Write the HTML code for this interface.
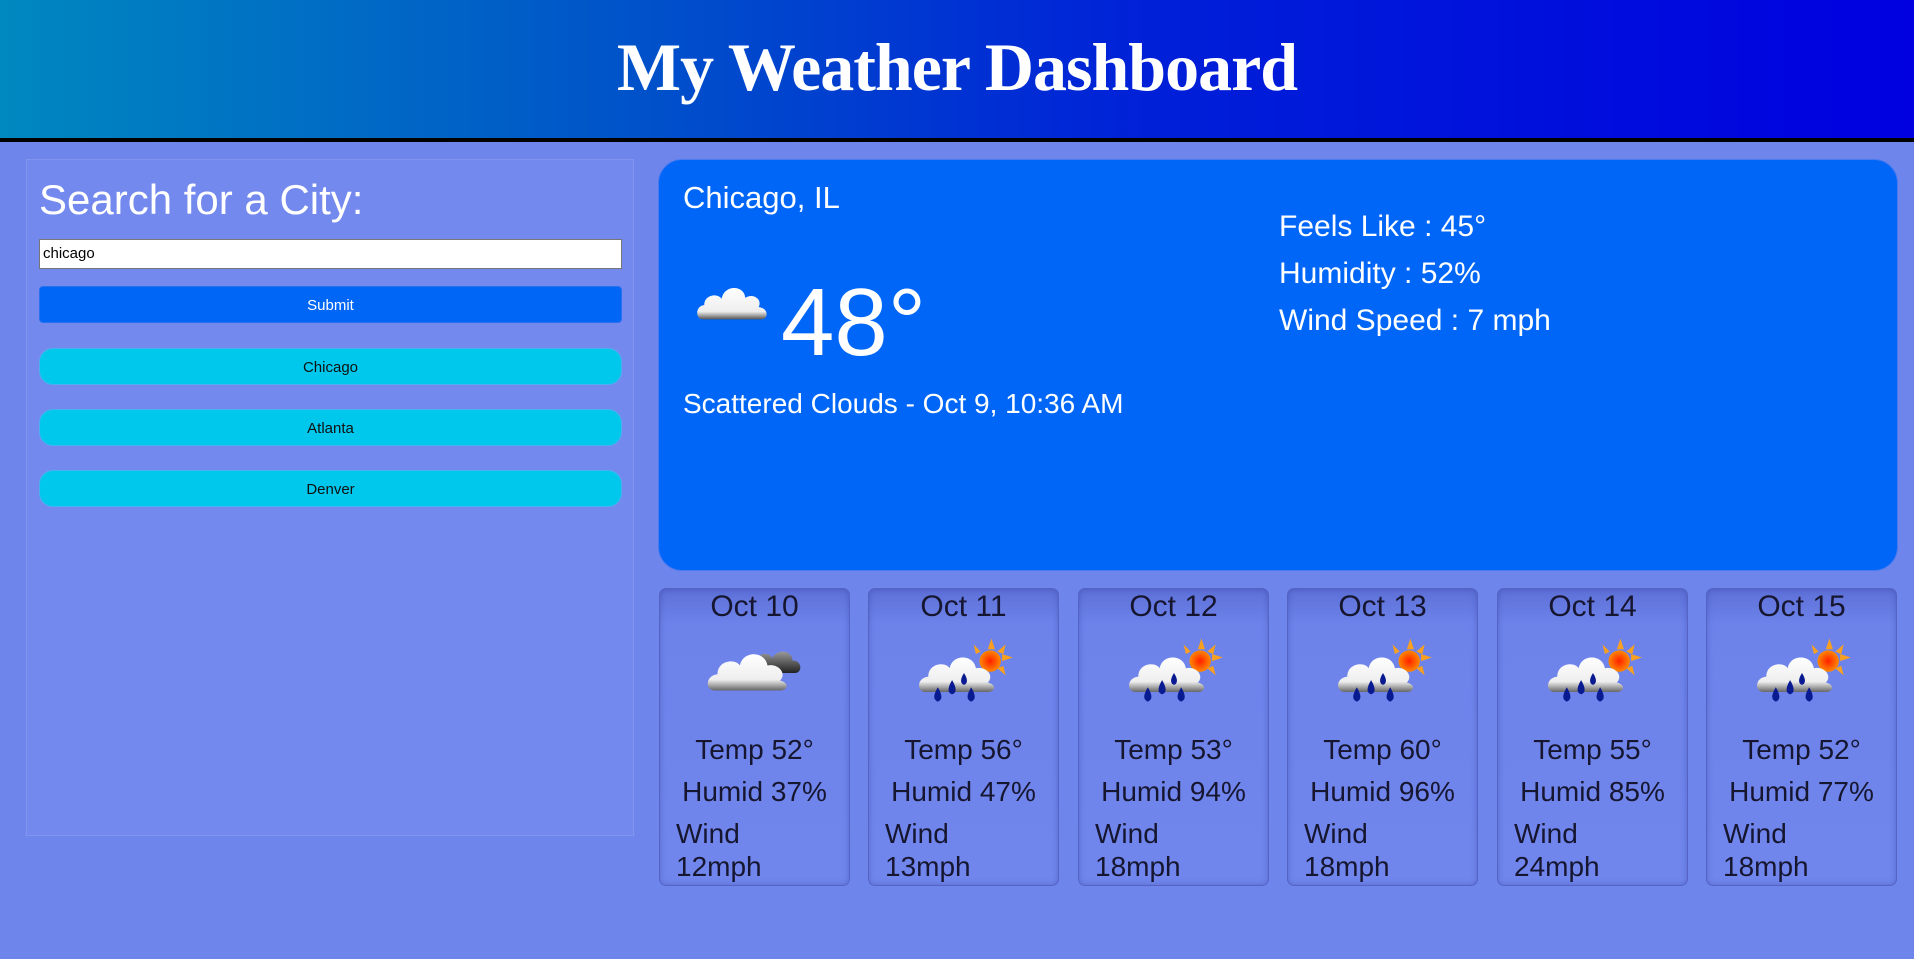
<!DOCTYPE html>
<html><head><meta charset="utf-8"><style>
*{box-sizing:border-box;margin:0;padding:0}
body{width:1914px;height:959px;overflow:hidden;background:#6e86ec;font-family:"Liberation Sans",sans-serif;position:relative}
header{position:absolute;left:0;top:0;width:1914px;height:142px;background:linear-gradient(90deg,#0088c0 0%,#0058c8 30%,#0020d8 60%,#0000e0 100%);border-bottom:4px solid #000}
header h1{position:absolute;left:0;right:0;top:28px;text-align:center;font-family:"Liberation Serif",serif;font-weight:bold;font-size:68px;color:#fff;letter-spacing:-1px}
.side{position:absolute;left:26px;top:159px;width:608px;height:677px;background:#7489ee;border:1px solid #8296f0}
.side h2{position:absolute;left:12px;top:16px;font-size:42px;font-weight:normal;color:#fff}
.inp{position:absolute;left:12px;top:79px;width:583px;height:30px;background:#fff;border:1px solid #777;font-size:15px;padding:5px 3px;color:#000}
.btn{position:absolute;left:12px;width:583px;height:37px;text-align:center;font-size:15px;line-height:37px}
.sub{top:126px;background:#0066f6;color:#fff;border-radius:4px;border:1px solid #2a70ee}
.city{background:#00c8ec;color:#111;border-radius:14px;border:1px solid #4ab0f0}
.main{position:absolute;left:658px;top:159px;width:1240px;height:412px;background:#0066f8;border-radius:24px;color:#fff;border:1px solid #4a7af0}
.t{position:absolute;white-space:nowrap}
.card{position:absolute;top:588px;width:191px;height:298px;border-radius:7px;border:1px solid #5563c4;background:linear-gradient(#5d70d8 0%,#6d83ea 12%,#7086ec 100%);box-shadow:inset 0 0 6px rgba(40,50,140,.35);color:#161630;font-size:28px}
.card .d{position:absolute;top:1px;left:0;right:0;text-align:center;font-size:30px}
.card .ic{position:absolute;left:50%;top:44px;margin-left:-50px}
.card .tp{position:absolute;top:145px;left:0;right:0;text-align:center}
.card .hu{position:absolute;top:187px;left:0;right:0;text-align:center}
.card .w{position:absolute;top:228px;left:16px;line-height:33px}
</style></head><body>
<header><h1>My Weather Dashboard</h1></header>
<div class="side">
<h2>Search for a City:</h2>
<div class="inp">chicago</div>
<div class="btn sub">Submit</div>
<div class="btn city" style="top:188px">Chicago</div>
<div class="btn city" style="top:249px">Atlanta</div>
<div class="btn city" style="top:310px">Denver</div>
</div>
<div class="main">
<div class="t" style="left:24px;top:20px;font-size:31px">Chicago, IL</div>
<svg class="t" style="left:36px;top:120px" width="76" height="46" viewBox="0 4 74 40"><defs><linearGradient id="cg" x1="0" y1="0" x2="0" y2="1"><stop offset="0" stop-color="#fff"/><stop offset=".75" stop-color="#eee"/><stop offset="1" stop-color="#555"/></linearGradient></defs><path d="M8 40 C0 40 0 27 9 26 C9 16 22 14 26 20 C28 6 48 6 49 19 C56 14 66 20 62 28 C72 29 72 40 64 40 Z" fill="url(#cg)"/></svg>
<div class="t" style="left:122px;top:108px;font-size:96px">48°</div>
<div class="t" style="left:24px;top:228px;font-size:28px">Scattered Clouds - Oct 9, 10:36 AM</div>
<div class="t" style="left:620px;top:50px;font-size:30px">Feels Like : 45°</div>
<div class="t" style="left:620px;top:97px;font-size:30px">Humidity : 52%</div>
<div class="t" style="left:620px;top:144px;font-size:30px">Wind Speed : 7 mph</div>
</div>

<svg width="0" height="0" style="position:absolute"><defs>
<linearGradient id="cw" x1="0" y1="0" x2="0" y2="1"><stop offset="0" stop-color="#fff"/><stop offset=".7" stop-color="#eee"/><stop offset="1" stop-color="#666"/></linearGradient>
<linearGradient id="cd" x1="0" y1="0" x2="0" y2="1"><stop offset="0" stop-color="#999"/><stop offset="1" stop-color="#222"/></linearGradient>
<radialGradient id="sn"><stop offset="0" stop-color="#ff2000"/><stop offset="1" stop-color="#ff8800"/></radialGradient>
<g id="cl"><path d="M42 30 C40 20 50 18 54 24 C58 16 70 18 70 26 C78 26 78 36 72 36 L46 36 Z" fill="url(#cd)"/><path d="M8 50 C0 50 0 38 10 37 C10 26 24 24 28 30 C30 18 48 18 50 30 C58 28 66 36 60 42 C68 44 66 50 60 50 Z" fill="url(#cw)"/></g>
<g id="rn"><g fill="#f9a020"><path d="M62 12 l3-9 3 9z"/><path d="M74 22 l9-3 -9-3z"/><path d="M70 14 l7-6 -2 8z"/><path d="M56 14 l-6-6 2 8z"/><path d="M70 28 l7 6 -2-8z"/></g><circle cx="64" cy="22" r="9" fill="url(#sn)"/><path d="M10 48 C2 48 2 36 12 35 C12 24 26 22 30 28 C32 16 50 16 52 28 C60 26 68 34 62 40 C70 42 68 48 62 48 Z" fill="url(#cw)"/><g fill="#0a1a90"><path d="M20 44 q-6 10 0 12 q6-2 0-12z"/><path d="M32 38 q-6 10 0 12 q6-2 0-12z"/><path d="M42 32 q-5 8 0 10 q5-2 0-10z"/><path d="M48 44 q-6 10 0 12 q6-2 0-12z"/></g></g>
</defs></svg>

<div class="card" style="left:659px"><div class="d">Oct 10</div><svg class="ic" width="100" height="80" viewBox="0 10 80 52"><use href="#cl"/></svg><div class="tp">Temp 52°</div><div class="hu">Humid 37%</div><div class="w">Wind<br>12mph</div></div>
<div class="card" style="left:868px"><div class="d">Oct 11</div><svg class="ic" width="100" height="80" viewBox="0 4 84 56"><use href="#rn"/></svg><div class="tp">Temp 56°</div><div class="hu">Humid 47%</div><div class="w">Wind<br>13mph</div></div>
<div class="card" style="left:1078px"><div class="d">Oct 12</div><svg class="ic" width="100" height="80" viewBox="0 4 84 56"><use href="#rn"/></svg><div class="tp">Temp 53°</div><div class="hu">Humid 94%</div><div class="w">Wind<br>18mph</div></div>
<div class="card" style="left:1287px"><div class="d">Oct 13</div><svg class="ic" width="100" height="80" viewBox="0 4 84 56"><use href="#rn"/></svg><div class="tp">Temp 60°</div><div class="hu">Humid 96%</div><div class="w">Wind<br>18mph</div></div>
<div class="card" style="left:1497px"><div class="d">Oct 14</div><svg class="ic" width="100" height="80" viewBox="0 4 84 56"><use href="#rn"/></svg><div class="tp">Temp 55°</div><div class="hu">Humid 85%</div><div class="w">Wind<br>24mph</div></div>
<div class="card" style="left:1706px"><div class="d">Oct 15</div><svg class="ic" width="100" height="80" viewBox="0 4 84 56"><use href="#rn"/></svg><div class="tp">Temp 52°</div><div class="hu">Humid 77%</div><div class="w">Wind<br>18mph</div></div>
</body></html>
